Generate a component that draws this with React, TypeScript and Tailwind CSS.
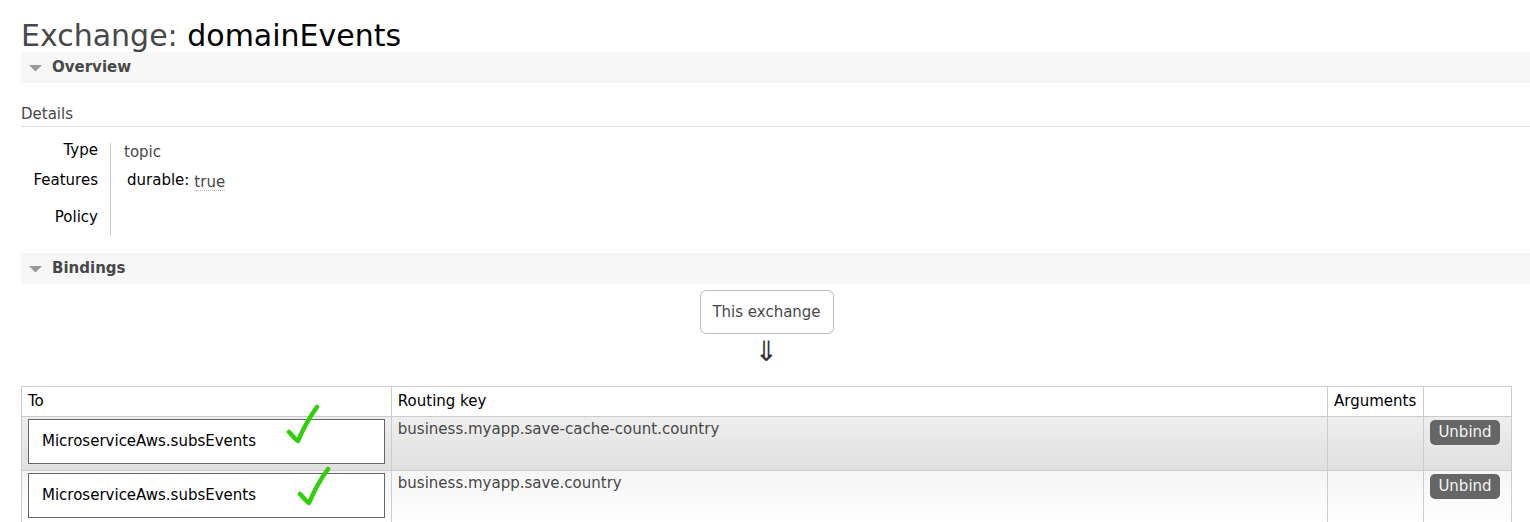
import React from "react";

const font = { fontFamily: '"DejaVu Sans", Verdana, sans-serif' };

function Check({ className }: { className?: string }) {
  return (
    <svg className={className} width="40" height="44" viewBox="0 0 40 44" fill="none">
      <path
        d="M3 28 C6 31 9 35 12 37 C15 30 20 18 31 3"
        stroke="#2fd10c"
        strokeWidth="4.5"
        strokeLinecap="round"
        strokeLinejoin="round"
      />
    </svg>
  );
}

function SectionBar({ title }: { title: string }) {
  return (
    <div className="flex h-[31px] items-center bg-[#f7f7f7] pl-[8px]">
      <svg width="13" height="8" viewBox="0 0 13 8" className="mr-[10px]">
        <path d="M0 1 L13 1 L6.5 7.5 Z" fill="#9a9a9a" />
      </svg>
      <span className="text-[15px] font-bold text-[#484848]">{title}</span>
    </div>
  );
}

function BindRow({ rk, alt, check }: { rk: string; alt: boolean; check: string }) {
  return (
    <tr
      className={
        alt
          ? "h-[54px] bg-gradient-to-b from-[#eeeeee] to-[#e0e0e0]"
          : "h-[54px] bg-gradient-to-b from-[#f5f5f5] to-[#ffffff]"
      }
    >
      <td className="relative border border-[#cccccc] px-[6px] py-[2px] align-top">
        <div className="flex h-[45px] items-center border border-[#666666] bg-white pl-[13px] text-[15px] text-black">
          MicroserviceAws.subsEvents
        </div>
        <Check className={"absolute " + check} />
      </td>
      <td className="border border-[#cccccc] px-[6px] pt-[3px] align-top text-[15px] leading-[18px] text-[#484848]">{rk}</td>
      <td className="border border-[#cccccc]"></td>
      <td className="border border-[#cccccc] px-[6px] pt-[3px] align-top">
        <button className="flex h-[25px] w-[70px] items-center justify-center rounded-[5px] bg-[#666666] text-[15px] text-[#f4f4f4]">Unbind</button>
      </td>
    </tr>
  );
}

export default function App() {
  return (
    <div className="min-h-[522px] overflow-hidden bg-white pl-[21px]" style={font}>
      <h1 className="pt-[20px] text-[30px] leading-[32px] font-normal text-[#484848]">
        Exchange: <span className="text-black">domainEvents</span>
      </h1>
      <SectionBar title="Overview" />
      <div className="mt-[22px] border-b border-[#dddddd] pb-[3px] text-[15px] leading-[18px] text-[#484848]">Details</div>
      <div className="mt-[16px] flex">
        <div className="flex w-[89px] flex-col items-end pr-[12px] text-[15px] leading-[14px] text-black">
          <div className="h-[30px]">Type</div>
          <div className="h-[30px]">Features</div>
          <div className="h-[33px] pt-[7px]">Policy</div>
        </div>
        <div className="h-[93px] w-px bg-[#cccccc]"></div>
        <div className="flex flex-col pl-[13px] text-[15px] leading-[14px]">
          <div className="h-[30px] pt-[2px] text-[#484848]">topic</div>
          <div className="flex h-[30px] items-start pl-[3px]">
            <span className="text-black">durable:</span>
            <span className="ml-[5px] mt-[2px] border-b border-dotted border-[#bbbbbb] pb-[1px] text-[#484848]">true</span>
          </div>
        </div>
      </div>
      <div className="mt-[17px]">
        <SectionBar title="Bindings" />
      </div>
      <div className="flex w-[1491px] flex-col items-center">
        <div className="mt-[6px] flex h-[44px] w-[134px] items-center justify-center rounded-[6px] border border-[#bbbbbb] text-[15px] text-[#484848]">
          This exchange
        </div>
        <div className="mt-[3px] text-[28px] leading-[30px] text-[#333333]">⇓</div>
      </div>
      <table className="mt-[19px] w-[1491px] border-collapse text-left">
        <thead>
          <tr className="h-[30px] text-[15px] text-black">
            <th className="w-[370px] border border-[#cccccc] px-[6px] font-normal">To</th>
            <th className="w-[937px] border border-[#cccccc] px-[6px] font-normal">Routing key</th>
            <th className="w-[96px] border border-[#cccccc] px-[6px] font-normal">Arguments</th>
            <th className="w-[88px] border border-[#cccccc] font-normal"></th>
          </tr>
        </thead>
        <tbody>
          <BindRow rk="business.myapp.save-cache-count.country" alt={true} check="left-[264px] top-[-13px]" />
          <BindRow rk="business.myapp.save.country" alt={false} check="left-[275px] top-[-5px]" />
        </tbody>
      </table>
    </div>
  );
}
